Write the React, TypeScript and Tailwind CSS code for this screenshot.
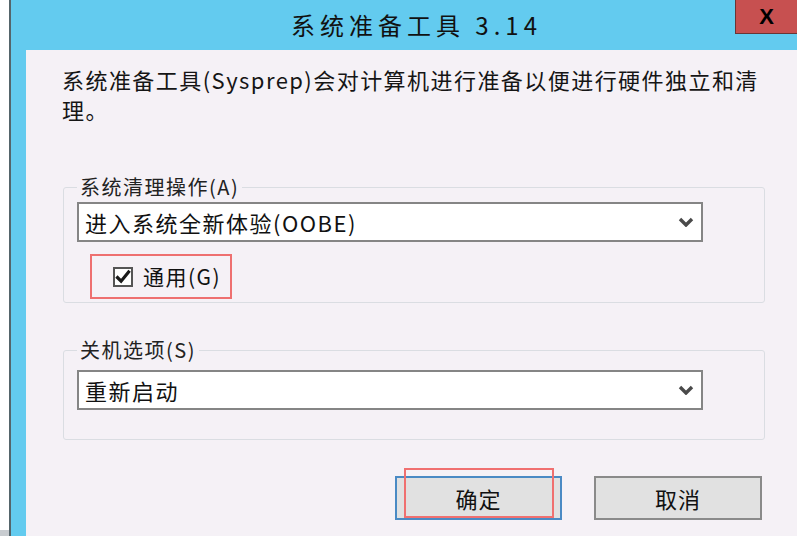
import React from 'react';

const font = { fontFamily: '"Noto Sans CJK SC", "Noto Sans", sans-serif' };

function Chevron() {
    return (
        <svg width="16" height="10" viewBox="0 0 16 10" className="mr-[7px]">
            <polyline points="2,2 8,8 14,2" fill="none" stroke="#4a4a4a" strokeWidth="3.4" strokeLinejoin="miter" />
        </svg>
    );
}

function Select({ value }: { value: string }) {
    return (
        <div className="w-[626px] h-[40px] bg-white border-2 border-[#858585] flex items-center justify-between pl-[6px]">
            <span className="text-[22px] leading-none tracking-[1.5px] text-[#111]">{value}</span>
            <Chevron />
        </div>
    );
}

function GroupBox({ label, children, box }: { label: string; children: React.ReactNode; box: string }) {
    return (
        <fieldset className={`border border-[#dadde2] rounded-[3px] pl-[13px] ${box}`}>
            <legend className="px-[3px] text-[20px] leading-[24px] tracking-[1.5px] text-[#222]">{label}</legend>
            {children}
        </fieldset>
    );
}

export default function App() {
    return (
        <div className="w-[797px] h-[536px] overflow-hidden flex bg-white" style={font}>
            <div className="w-[9px] h-full bg-white border-b-[6px] border-[#c8ccd0]" />
            <div className="flex-1 flex flex-col bg-[#63cbef] border-l-2 border-[#55656b] pl-[15px]">
                {/* title bar */}
                <div className="relative h-[50px] flex items-center justify-center pl-[10px]">
                    <span className="text-[24px] tracking-[5px] text-[#111]">系统准备工具 3.14</span>
                    <div className="absolute top-0 right-0 w-[62px] h-[34px] bg-[#c75050] border-l border-b border-[#6a3535] flex items-center justify-center">
                        <span className="text-[22px] leading-none font-bold text-black" style={{ fontFamily: '"Liberation Sans", sans-serif' }}>X</span>
                    </div>
                </div>

                {/* body */}
                <div className="flex-1 bg-[#f5f1f6] pl-[37px] pr-[32px]">
                    <p className="pt-[14px] text-[22px] leading-[30px] tracking-[1.45px] text-[#151515] ml-[-1px]">
                        系统准备工具(Sysprep)会对计算机进行准备以便进行硬件独立和清
                        <br />
                        理。
                    </p>

                    <div className="mt-[51px]">
                        <GroupBox label="系统清理操作(A)" box="pt-[3px] pb-[3px]">
                            <Select value="进入系统全新体验(OOBE)" />
                            <div className="mt-[12px] ml-[13px] w-[142px] h-[45px] border-2 border-[#ee7070] flex items-center pl-[21px]">
                                <div className="w-[20px] h-[20px] bg-white border-2 border-[#555] flex items-center justify-center">
                                    <svg width="17" height="15" viewBox="0 0 17 15">
                                        <path d="M1.5 7.5 L6.5 12.5 L15.5 1.5" fill="none" stroke="#1a1a1a" strokeWidth="3.4" />
                                    </svg>
                                </div>
                                <span className="ml-[10px] text-[21px] leading-none tracking-[1.5px] text-[#111]">通用(G)</span>
                            </div>
                        </GroupBox>
                    </div>

                    <div className="mt-[35px]">
                        <GroupBox label="关机选项(S)" box="pt-[8px] pb-[29px]">
                            <Select value="重新启动" />
                        </GroupBox>
                    </div>

                    <div className="mt-[36px] flex justify-end gap-[32px] pr-[3px]">
                        <div className="relative w-[167px] h-[44px] bg-[#e1e1e1] border-2 border-[#4a8ac4] flex items-center justify-center">
                            <span className="text-[22px] tracking-[1px] text-[#111]">确定</span>
                            <div className="absolute left-[7px] top-[-10px] w-[150px] h-[50px] border-2 border-[#f07070]" />
                        </div>
                        <div className="w-[168px] h-[44px] bg-[#e1e1e1] border-2 border-[#8a8a8a] flex items-center justify-center">
                            <span className="text-[22px] tracking-[1px] text-[#111]">取消</span>
                        </div>
                    </div>
                </div>
            </div>
        </div>
    );
}
